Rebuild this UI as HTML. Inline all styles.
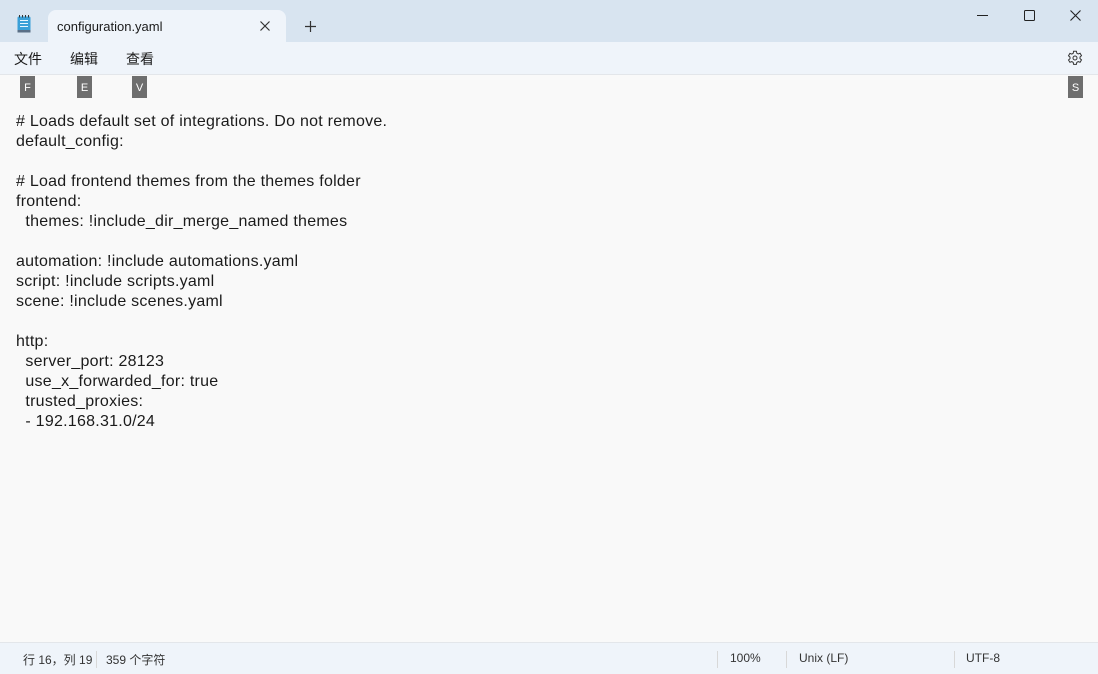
<!DOCTYPE html>
<html><head><meta charset="utf-8"><style>
*{margin:0;padding:0;box-sizing:border-box}
body{width:1098px;height:674px;overflow:hidden;background:#f9f9f9;font-family:"Liberation Sans","Noto Sans CJK SC",sans-serif;position:relative;color:#1b1b1b}
.title{position:absolute;left:0;top:0;width:1098px;height:42px;background:#d8e4f0}
.tab{position:absolute;left:48px;top:10px;width:238px;height:33px;background:#eff4fa;border-radius:8px 8px 0 0}
.tab span{position:absolute;left:9px;top:9px;font-size:13px;color:#1b1b1b}
.menu{position:absolute;left:0;top:42px;width:1098px;height:33px;background:#eff4fa;border-bottom:1px solid #e3e6ea}
.menu span{position:absolute;top:7px;font-size:14px}
.key{position:absolute;top:76px;width:15px;height:22px;background:#6e6e6e;color:#fff;font-size:11px;text-align:center;line-height:24px}
pre{position:absolute;left:16px;top:112px;font-family:"Liberation Sans",sans-serif;font-size:16px;letter-spacing:0.25px;line-height:20px;color:#1b1b1b}
.status{position:absolute;left:0;top:642px;width:1098px;height:32px;background:#eff4fa;border-top:1px solid #e3e6ea;font-size:12px;color:#333}
.status span{position:absolute;top:8px}
.sep{position:absolute;top:8px;width:1px;height:17px;background:#d8d8d8}
</style></head><body>
<div class="title">
<svg style="position:absolute;left:17px;top:15px" width="14" height="18" viewBox="0 0 14 18"><rect x="0.5" y="1.5" width="13" height="16" rx="1.5" fill="#3aa0d8"/><rect x="0.5" y="15" width="13" height="2.5" fill="#5a6f86"/><g stroke="#e8f6ff" stroke-width="1"><line x1="3" y1="5.5" x2="11" y2="5.5"/><line x1="3" y1="8.5" x2="11" y2="8.5"/><line x1="3" y1="11.5" x2="11" y2="11.5"/></g><g fill="#333"><rect x="2" y="0" width="1" height="2.5"/><rect x="5" y="0" width="1" height="2.5"/><rect x="8" y="0" width="1" height="2.5"/><rect x="11" y="0" width="1" height="2.5"/></g></svg>
<div class="tab"><span>configuration.yaml</span>
<svg style="position:absolute;left:212px;top:11px" width="10" height="10"><path d="M0.5 0.5L9.5 9.5M9.5 0.5L0.5 9.5" stroke="#333" stroke-width="1.2"/></svg></div>
<svg style="position:absolute;left:305px;top:21px" width="11" height="11"><path d="M5.5 0V11M0 5.5H11" stroke="#333" stroke-width="1.2"/></svg>
<svg style="position:absolute;left:977px;top:15px" width="11" height="1"><path d="M0 0.5H11" stroke="#222"/></svg>
<svg style="position:absolute;left:1024px;top:10px" width="11" height="11"><rect x="0.5" y="0.5" width="10" height="10" rx="1" fill="none" stroke="#222"/></svg>
<svg style="position:absolute;left:1070px;top:10px" width="11" height="11"><path d="M0.5 0.5L10.5 10.5M10.5 0.5L0.5 10.5" stroke="#222" stroke-width="1.1"/></svg>
</div>
<div class="menu">
<span style="left:14px">文件</span><span style="left:70px">编辑</span><span style="left:126px">查看</span>
<svg style="position:absolute;left:1067px;top:8px" width="16" height="16" viewBox="0 0 16 16"><path d="M6.6 1.2h2.8l.4 2 1.4.8 1.9-.7 1.4 2.4-1.5 1.3v1.6l1.5 1.3-1.4 2.4-1.9-.7-1.4.8-.4 2H6.6l-.4-2-1.4-.8-1.9.7L1.5 10l1.5-1.3V7.1L1.5 5.8l1.4-2.4 1.9.7 1.4-.8z" fill="none" stroke="#333" stroke-width="1"/><circle cx="8" cy="8" r="2" fill="none" stroke="#333"/></svg>
</div>
<div class="key" style="left:20px">F</div><div class="key" style="left:77px">E</div><div class="key" style="left:132px">V</div><div class="key" style="left:1068px">S</div>
<pre># Loads default set of integrations. Do not remove.
default_config:

# Load frontend themes from the themes folder
frontend:
  themes: !include_dir_merge_named themes

automation: !include automations.yaml
script: !include scripts.yaml
scene: !include scenes.yaml

http:
  server_port: 28123
  use_x_forwarded_for: true
  trusted_proxies:
  - 192.168.31.0/24</pre>
<div class="status">
<span style="left:23px">行 16，列 19</span><div class="sep" style="left:96px"></div>
<span style="left:106px">359 个字符</span>
<div class="sep" style="left:717px"></div><span style="left:730px">100%</span>
<div class="sep" style="left:786px"></div><span style="left:799px">Unix (LF)</span>
<div class="sep" style="left:954px"></div><span style="left:966px">UTF-8</span>
</div>
</body></html>
